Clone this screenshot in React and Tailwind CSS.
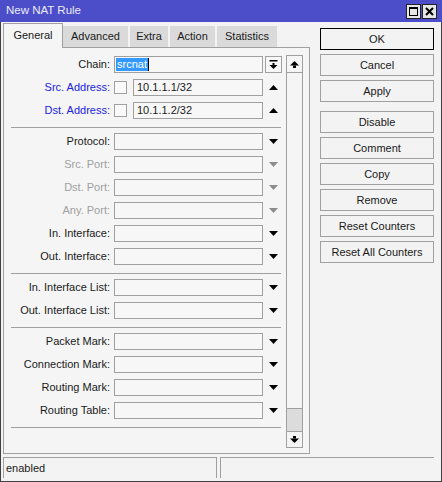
import React from "react";

const F = { fontFamily: '"Liberation Sans", Arial, sans-serif' };

function Tri({ dir = "down", color = "#000" }) {
  return (
    <svg width="9" height="5" viewBox="0 0 9 5">
      {dir === "down" ? (
        <polygon points="0,0 9,0 4.5,5" fill={color} />
      ) : (
        <polygon points="0,5 9,5 4.5,0" fill={color} />
      )}
    </svg>
  );
}

function Row({ label, labelClass = "text-[#1a1a1a]", arrowColor = "#000", children, arrow = "down" }) {
  return (
    <div className="flex items-center h-[17px]">
      <div className={"w-[106px] text-right leading-[17px] " + labelClass}>{label}</div>
      {children ? (
        children
      ) : (
        <div className="ml-[4px] w-[149px] h-[17px] border border-[#a0a0a0] bg-[#f7f7f7]" />
      )}
      <div className="w-[21px] flex justify-center">
        <Tri dir={arrow} color={arrowColor} />
      </div>
    </div>
  );
}

function Sep() {
  return <div className="ml-[7px] w-[270px] h-px bg-[#a0a0a0] mt-[2px] mb-[5px]" />;
}

function Btn({ children, def }) {
  return (
    <div
      className={
        "h-[22px] flex items-center justify-center border bg-[#f3f3f3] text-[#1a1a1a] " +
        (def ? "border-black" : "border-[#a0a0a0]")
      }
    >
      {children}
    </div>
  );
}

export default function App() {
  return (
    <div className="w-[442px] h-[482px] bg-[#f3f3f3] text-[11px] text-[#1a1a1a] flex flex-col" style={F}>
      {/* title bar */}
      <div className="h-[22px] bg-[#4b4ec8] flex items-center justify-between pl-[6px] pr-[5px]">
        <span className="text-[#ebebf7] text-[11.5px]">New NAT Rule</span>
        <div className="flex gap-[1px] mt-[1px]">
          <div className="w-[15px] h-[15px] bg-[#e6e6e6] border border-[#222] flex items-center justify-center">
            <div className="w-[9px] h-[9px] border border-black border-t-2" />
          </div>
          <div className="w-[15px] h-[15px] bg-[#e6e6e6] border border-[#222] flex items-center justify-center">
            <svg width="9" height="9" viewBox="0 0 9 9">
              <path d="M1 1 L8 8 M8 1 L1 8" stroke="#000" strokeWidth="2" />
            </svg>
          </div>
        </div>
      </div>

      <div className="flex-1 flex flex-col border-l border-r border-b border-[#404040] pl-[2px] pr-[7px]">
        <div className="flex">
          {/* left */}
          <div className="w-[307px] flex flex-col">
            <div className="flex items-end h-[24px] mt-[1px]">
              <div className="relative z-10 w-[60px] h-[25px] -mb-[1px] bg-[#f5f5f5] border border-b-0 border-[#a0a0a0] flex items-center justify-center pb-[2px]">
                General
              </div>
              <div className="w-[65px] h-[21px] bg-[#dadada] flex items-center justify-center">Advanced</div>
              <div className="ml-[2px] w-[38px] h-[21px] bg-[#dadada] flex items-center justify-center">Extra</div>
              <div className="ml-[2px] w-[45px] h-[21px] bg-[#dadada] flex items-center justify-center">Action</div>
              <div className="ml-[2px] w-[60px] h-[21px] bg-[#dadada] flex items-center justify-center">Statistics</div>
            </div>
            <div className="h-[407px] border border-[#a0a0a0] bg-[#f5f5f5] flex">
              <div className="w-[281px] pt-[8px] flex flex-col">
                {/* Chain */}
                <div className="flex items-center h-[17px] mb-[6px]">
                  <div className="w-[106px] text-right leading-[17px]">Chain:</div>
                  <div className="ml-[4px] w-[149px] h-[17px] border border-[#a0a0a0] bg-[#f7f7f7] flex items-center pl-[1px]">
                    <span className="bg-[#3399ff] text-white px-[1px] leading-[13px]">srcnat</span>
                    <span className="w-px h-[13px] bg-black" />
                  </div>
                  <div className="ml-[2px] w-[17px] h-[17px] border border-[#a0a0a0] bg-[#f7f7f7] flex items-center justify-center">
                    <svg width="9" height="9" viewBox="0 0 9 9">
                      <rect x="0.5" y="0" width="8" height="1.5" fill="#000" />
                      <rect x="3.5" y="3" width="2" height="2" fill="#000" />
                      <polygon points="0.5,5 8.5,5 4.5,9" fill="#000" />
                    </svg>
                  </div>
                </div>
                {["Src. Address:", "Dst. Address:"].map((l, i) => (
                  <div key={l} className="mb-[6px]">
                    <Row label={l} labelClass="text-[#2222dd]" arrow="up">
                      <div className="ml-[4px] w-[13px] h-[13px] border border-[#a0a0a0] bg-[#fafafa]" />
                      <div className="ml-[6px] w-[130px] h-[17px] border border-[#a0a0a0] bg-[#f7f7f7] pl-[3px] leading-[15px]">
                        {i === 0 ? "10.1.1.1/32" : "10.1.1.2/32"}
                      </div>
                    </Row>
                  </div>
                ))}
                <Sep />
                {[
                  ["Protocol:", false],
                  ["Src. Port:", true],
                  ["Dst. Port:", true],
                  ["Any. Port:", true],
                  ["In. Interface:", false],
                  ["Out. Interface:", false],
                ].map(([l, dis]) => (
                  <div key={l} className="mb-[6px]">
                    <Row
                      label={l}
                      labelClass={dis ? "text-[#a0a0a0]" : "text-[#1a1a1a]"}
                      arrowColor={dis ? "#8c8c8c" : "#000"}
                    />
                  </div>
                ))}
                <Sep />
                {["In. Interface List:", "Out. Interface List:"].map((l) => (
                  <div key={l} className="mb-[6px]">
                    <Row label={l} />
                  </div>
                ))}
                <Sep />
                {["Packet Mark:", "Connection Mark:", "Routing Mark:", "Routing Table:"].map((l) => (
                  <div key={l} className="mb-[6px]">
                    <Row label={l} />
                  </div>
                ))}
                <Sep />
              </div>
              {/* scrollbar */}
              <div className="ml-[1px] mt-[7px] w-[17px] h-[393px] border border-[#a0a0a0] bg-[#f5f5f5] flex flex-col">
                <div className="h-[17px] border-b border-[#a0a0a0] flex items-center justify-center">
                  <svg width="9" height="7" viewBox="0 0 9 7">
                    <polygon points="0,4.5 9,4.5 4.5,0" fill="#000" />
                    <rect x="3" y="4.5" width="3" height="2.5" fill="#000" />
                  </svg>
                </div>
                <div className="flex-1" />
                <div className="h-[24px] border-t border-b border-[#a0a0a0] bg-[#dcdcdc]" />
                <div className="h-[15px] flex items-center justify-center">
                  <svg width="9" height="7" viewBox="0 0 9 7">
                    <rect x="3" y="0" width="3" height="2.5" fill="#000" />
                    <polygon points="0,2.5 9,2.5 4.5,7" fill="#000" />
                  </svg>
                </div>
              </div>
            </div>
          </div>
          {/* right */}
          <div className="ml-[10px] w-[114px] pt-[6px] flex flex-col gap-[4px]">
            <Btn def>OK</Btn>
            <Btn>Cancel</Btn>
            <Btn>Apply</Btn>
            <div className="mt-[5px]">
              <Btn>Disable</Btn>
            </div>
            <Btn>Comment</Btn>
            <Btn>Copy</Btn>
            <Btn>Remove</Btn>
            <Btn>Reset Counters</Btn>
            <Btn>Reset All Counters</Btn>
          </div>
        </div>
        {/* status bar */}
        <div className="mt-[3px] h-[21px] flex">
          <div className="w-[214px] border-t border-l border-r border-[#a0a0a0] pl-[2px] leading-[20px]">enabled</div>
          <div className="ml-[3px] flex-1 border-t border-l border-[#a0a0a0]" />
        </div>
      </div>
    </div>
  );
}
